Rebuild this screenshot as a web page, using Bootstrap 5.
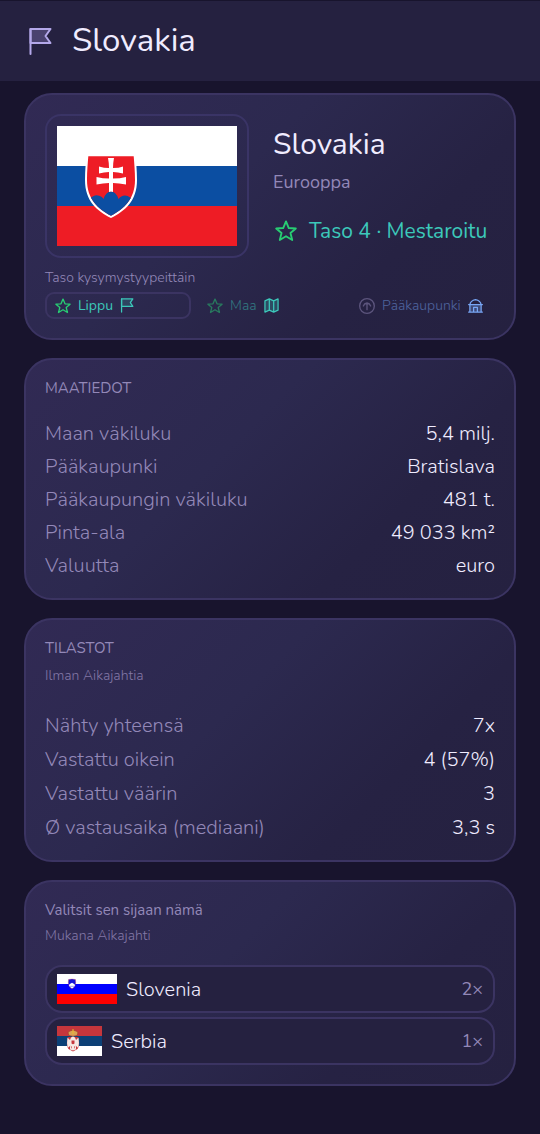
<!DOCTYPE html>
<html lang="fi">
<head>
<meta charset="utf-8">
<meta name="viewport" content="width=device-width, initial-scale=1">
<title>Slovakia</title>
<link href="https://cdn.jsdelivr.net/npm/bootstrap@5.3.0/dist/css/bootstrap.min.css" rel="stylesheet">
<style>
:root { --line: #3b3462; --panel: #252140; --muted: #9388b8; --bright: #f0ecff; --teal: #3cc8ba; --green: #28cd73; }
body { background: #18142d; color: var(--bright); font-family: Nunito, Lato, "Noto Sans", sans-serif; font-size: 20px; line-height: 27px; font-weight: 300; }
.topbar { background: var(--panel); border-top: 1px solid #18142d; padding: 20px 24px; gap: 16px; }
.topbar h1 { font-size: 33px; line-height: 40px; }
.stack { padding: 12px 24px 48px; gap: 18px; }
.panel { border: 2px solid var(--line); border-radius: 28px; padding: 19px; background: linear-gradient(135deg, #312a54 0%, #2c294f 40%, #262243 72%, #252140 100%); }
.frame { border: 2px solid #3a3466; border-radius: 16px; padding: 10px; }
.hero { gap: 24px; }
.hero h2 { font-size: 30px; line-height: 36px; margin-bottom: 7px; }
.region { font-size: 18px; line-height: 24px; margin-bottom: 23px; }
.level { font-size: 21px; line-height: 28px; gap: 10px; color: var(--teal); }
.dim { color: var(--muted); }
.dimmer { color: #8277a6; }
.label-sm { font-size: 14px; line-height: 20px; margin: 10px 0 4px; }
.kinds { display: grid; grid-template-columns: repeat(3, minmax(0, 1fr)); gap: 6px; }
.kind { background: none; border: 2px solid transparent; border-radius: 9px; height: 27px; padding: 0 8px; font-size: 14px; line-height: 20px; font-weight: 300; gap: 7px; color: var(--teal); white-space: nowrap; }
.kind.active { border-color: var(--line); font-weight: 400; }
.faded { opacity: .5; }
.title-sm { font-size: 15px; line-height: 18px; }
.title-gap { margin-bottom: 10px; }
.sub { font-size: 14px; line-height: 18px; }
.facts { gap: 6px; margin-top: 23px; }
.stats { gap: 7px; margin-top: 27px; }
.picks { gap: 4px; margin-top: 20px; }
.pick { background: var(--panel); border: 2px solid var(--line); border-radius: 17px; height: 48px; padding: 0 10px; gap: 9px; color: var(--bright); text-align: left; font-weight: 300; }
.times { font-size: 18px; font-weight: 400; }
svg { display: block; flex: none; }
.ico { fill: none; stroke: currentColor; stroke-linejoin: round; stroke-linecap: round; }
</style>
</head>
<body>
<svg width="0" height="0" class="position-absolute" aria-hidden="true">
  <symbol id="star" viewBox="0 0 24 24"><path d="M12 1.6 15 8.8 22.6 9.300 16.800 14.200 18.700 21.700 12 17.600 5.300 21.700 7.200 14.200 1.400 9.300 9 8.800Z"/></symbol>
  <symbol id="flag" viewBox="0 0 24 24"><path d="M2.500 1.500H20.500L16.500 7.500 20.500 13.500H2.500Z" fill="currentColor" fill-opacity=".18"/><path d="M2.500 1.500V22.500"/></symbol>
</svg>

<header class="topbar d-flex align-items-center">
  <svg class="ico" width="32" height="32" viewBox="0 0 32 32" stroke-width="2" style="color:#b4a8ea"><path d="M6.500 4H26.500L21.500 11 26.500 18H6.500Z" fill="#4a426f"/><path d="M6.500 4V29"/></svg>
  <h1 class="fw-normal mb-0">Slovakia</h1>
</header>

<main class="stack d-flex flex-column">
  <section class="panel">
    <div class="hero d-flex align-items-center">
      <div class="frame">
        <svg width="180" height="120" viewBox="0 0 180 120" role="img" aria-label="Slovakian lippu">
          <path fill="#fff" d="M0 0h180v40H0z"/><path fill="#0b4ea2" d="M0 40h180v40H0z"/><path fill="#ee1c25" d="M0 80h180v40H0z"/>
          <path d="M29.500 28.500H78.500C79 35 80 44 80 54 80 75 68 85 54 92 40 85 28 75 28 54 28 44 29 35 29.500 28.500Z" fill="#fff"/>
          <clipPath id="skc"><path d="M31.300 30.300H76.700C77.200 37 78 45 78 54 78 73 67 83 54 89.700 41 83 30 73 30 54 30 45 30.800 37 31.300 30.300Z"/></clipPath>
          <g clip-path="url(#skc)"><path fill="#ee1c25" d="M25 28h60v65H25z"/>
          <path fill="#0b4ea2" d="M30 92V76Q36 68 41 69.500 45 70 46.500 73 49 65.500 54 65.500 59 65.500 61.500 73 64 69.500 68 69.500 74 70 79 78V92Z"/>
          <path fill="#fff" d="M51 32H57Q56 37 56 42 62 42 66 40.500V47.500Q61 46 56 46V52.500Q63 52.500 69 51V58.500Q62 57 56 57V66Q54 65 52 66V57Q46 57 39.500 58.500V51Q46 52.500 52 52.500V46Q47 46 42 47.500V40.500Q47 42 52 42 52 37 51 32Z"/></g>
        </svg>
      </div>
      <div class="fw-normal">
        <h2 class="fw-normal">Slovakia</h2>
        <div class="region dim">Eurooppa</div>
        <div class="level d-flex align-items-center"><svg class="ico" width="26" height="26" viewBox="-2 -2 28 28" stroke-width="2" style="color:var(--green)"><use href="#star" width="24" height="24"/></svg><span>Taso 4 · Mestaroitu</span></div>
      </div>
    </div>
    <div class="label-sm dim">Taso kysymystyypeittäin</div>
    <div class="kinds">
      <button type="button" class="kind active d-flex align-items-center"><svg class="ico" width="16" height="16" stroke-width="2" style="color:var(--green)"><use href="#star"/></svg><span>Lippu</span><svg class="ico" width="15" height="15" stroke-width="2"><use href="#flag"/></svg></button>
      <button type="button" class="kind d-flex align-items-center"><svg class="ico faded" width="16" height="16" stroke-width="2" style="color:var(--green)"><use href="#star"/></svg><span class="faded">Maa</span><svg class="ico" width="15" height="15" viewBox="0 0 24 24" stroke-width="2"><path d="M1.500 4.500 8.500 1.500 15.500 4.500 22.500 1.500V19.500L15.500 22.500 8.500 19.500 1.500 22.500ZM8.500 1.500V19.500M15.500 4.500V22.500" fill="currentColor" fill-opacity=".25"/></svg></button>
      <button type="button" class="kind d-flex align-items-center" style="color:#78a6f5"><svg class="ico faded dim" width="16" height="16" viewBox="0 0 24 24" stroke-width="2"><circle cx="12" cy="12" r="11"/><path d="M12 17.500V8M6.500 12Q8 8 12 7.500 16 8 17.500 12"/></svg><span class="faded">Pääkaupunki</span><svg class="ico" width="15" height="15" viewBox="0 0 24 24" stroke-width="2"><path d="M3 11V22H21V11Z" fill="currentColor" fill-opacity=".3" stroke="none"/><path d="M1 10.500H23M1 22.500H23M3 10.500Q4 4 12 2.500 20 4 21 10.500M3 10.500V22M21 10.500V22M9 22V15H15V22"/></svg></button>
    </div>
  </section>

  <section class="panel">
    <h3 class="title-sm fw-normal dim mb-0">MAATIEDOT</h3>
    <dl class="facts d-flex flex-column mb-0">
      <div class="d-flex justify-content-between"><dt class="fw-light dim">Maan väkiluku</dt><dd class="mb-0">5,4 milj.</dd></div>
      <div class="d-flex justify-content-between"><dt class="fw-light dim">Pääkaupunki</dt><dd class="mb-0">Bratislava</dd></div>
      <div class="d-flex justify-content-between"><dt class="fw-light dim">Pääkaupungin väkiluku</dt><dd class="mb-0">481 t.</dd></div>
      <div class="d-flex justify-content-between"><dt class="fw-light dim">Pinta-ala</dt><dd class="mb-0">49 033 km²</dd></div>
      <div class="d-flex justify-content-between"><dt class="fw-light dim">Valuutta</dt><dd class="mb-0">euro</dd></div>
    </dl>
  </section>

  <section class="panel">
    <h3 class="title-sm title-gap fw-normal dim">TILASTOT</h3>
    <div class="sub dimmer">Ilman Aikajahtia</div>
    <dl class="stats d-flex flex-column mb-0">
      <div class="d-flex justify-content-between"><dt class="fw-light dim">Nähty yhteensä</dt><dd class="mb-0">7x</dd></div>
      <div class="d-flex justify-content-between"><dt class="fw-light dim">Vastattu oikein</dt><dd class="mb-0">4 (57%)</dd></div>
      <div class="d-flex justify-content-between"><dt class="fw-light dim">Vastattu väärin</dt><dd class="mb-0">3</dd></div>
      <div class="d-flex justify-content-between"><dt class="fw-light dim">Ø vastausaika (mediaani)</dt><dd class="mb-0">3,3 s</dd></div>
    </dl>
  </section>

  <section class="panel">
    <h3 class="title-sm fw-normal dim">Valitsit sen sijaan nämä</h3>
    <div class="sub dimmer">Mukana Aikajahti</div>
    <div class="picks d-flex flex-column">
      <button type="button" class="pick d-flex align-items-center">
        <svg width="60" height="30" viewBox="0 0 60 30" aria-hidden="true"><path fill="#fff" d="M0 0h60v10H0z"/><path fill="#00f" d="M0 10h60v10H0z"/><path fill="red" d="M0 20h60v10H0z"/>
          <path d="M11.500 5.500Q15 4.500 18.500 5.500 19.500 13 15 15 10.500 13 11.500 5.500Z" fill="#1414d8" stroke="#d33" stroke-width=".3"/><path d="M11.800 11 13.300 9.800 15 8.800 16.700 9.800 18.200 11Q17.500 13.500 15 14.500 12.500 13.500 11.800 11Z" fill="#fff"/><path d="M12.500 12.300H17.500" stroke="#33d" stroke-width=".5"/></svg>
        <span>Slovenia</span><span class="times dim ms-auto">2×</span>
      </button>
      <button type="button" class="pick d-flex align-items-center">
        <svg width="45" height="30" viewBox="0 0 45 30" aria-hidden="true"><path fill="#c6363c" d="M0 0h45v10H0z"/><path fill="#0c4076" d="M0 10h45v10H0z"/><path fill="#fff" d="M0 20h45v10H0z"/>
          <path d="M12 9.500Q10 5.500 13 5L16 4 19 5Q22 5.500 20 9.500 16 11 12 9.500Z" fill="#d9a254" stroke="#a33c2c" stroke-width=".7"/><path d="M16 3V8" stroke="#edb92e"/>
          <path d="M11 11H21Q23.500 19 20.500 23L16 25.500 11.500 23Q8.500 19 11 11Z" fill="#c6363c"/>
          <path d="M10.500 11.500 13 14 14 11.500 16 10.500 18 11.500 19 14 21.500 11.500Q22.500 17 21.300 22L19 20 19 23.500 16 24.500 13 23.500 13 20 10.700 22Q9.500 17 10.500 11.500Z" fill="#f5e8e4"/>
          <path d="M14.500 14.500H17.500V17.500Q16 19 14.500 17.500ZM13.500 19.500 15 21V23ZM18.500 19.500 17 21V23Z" fill="#c6363c"/></svg>
        <span>Serbia</span><span class="times dim ms-auto">1×</span>
      </button>
    </div>
  </section>
</main>
<script src="https://cdn.jsdelivr.net/npm/bootstrap@5.3.0/dist/js/bootstrap.bundle.min.js"></script>
</body>
</html>
